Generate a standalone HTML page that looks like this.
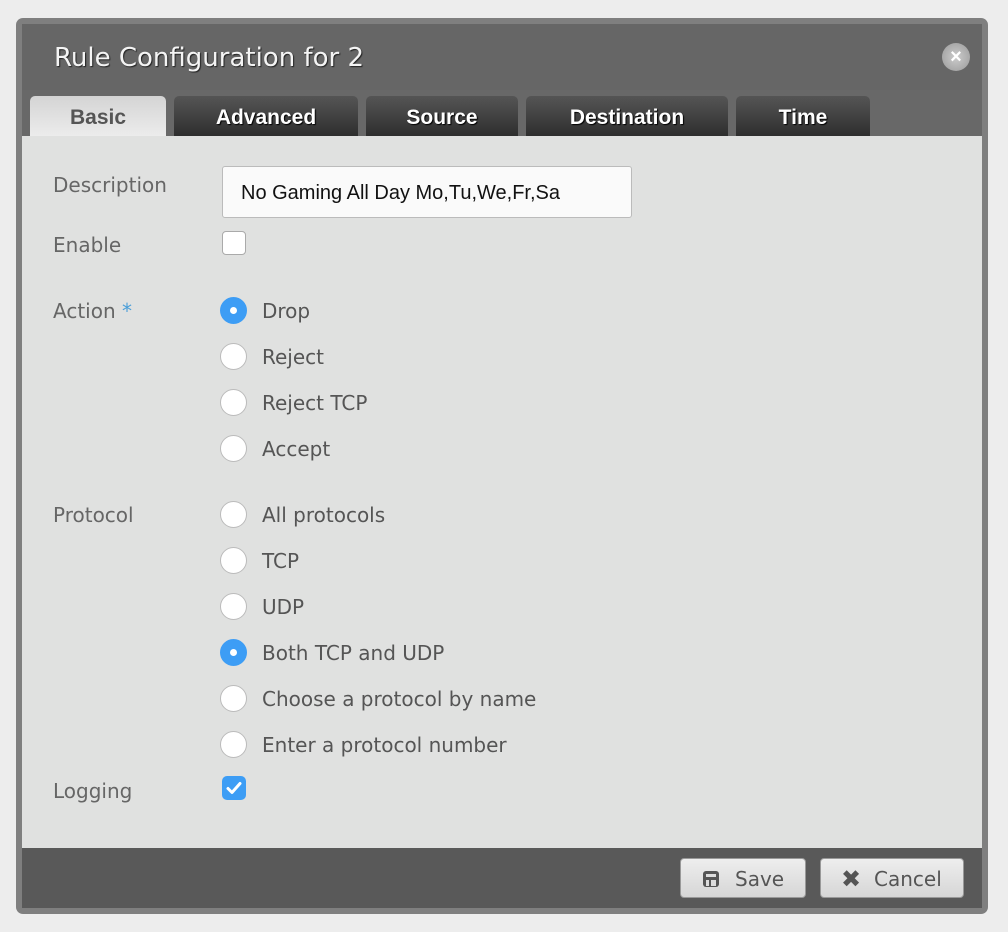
<!DOCTYPE html>
<html><head><style>
*{box-sizing:border-box;margin:0;padding:0}
body{width:1008px;height:932px;background:#ededed;font-family:"Liberation Sans",sans-serif;position:relative;overflow:hidden}
.dlg{position:absolute;left:16px;top:18px;width:972px;height:896px;background:#7f7f7f;border-radius:7px}
.title{position:absolute;left:22px;top:24px;width:960px;height:66px;background:#666;color:#f4f4f4;font-family:"DejaVu Sans",sans-serif;font-size:26px;padding:19px 0 0 32px;text-shadow:1px 1px 1px #222}
.close{position:absolute;left:942px;top:43px;width:28px;height:28px;border-radius:50%;background:radial-gradient(#ccc,#999);color:#fff;font-size:20px;font-weight:bold;text-align:center;line-height:28px}
.strip{position:absolute;left:22px;top:90px;width:960px;height:46px;background:#686868}
.tab{position:absolute;top:96px;height:40px;border-radius:5px 5px 0 0;background:linear-gradient(#555,#2e2e2e);color:#fff;font-weight:bold;font-size:21px;text-align:center;line-height:44px;text-shadow:1px 1px 1px #000}
.tab.on{background:linear-gradient(#d4d4d4,#ececec);color:#555;text-shadow:none}
.content{position:absolute;left:22px;top:136px;width:960px;height:712px;background:#e0e1e0}
.foot{position:absolute;left:22px;top:848px;width:960px;height:60px;background:#595959}
.lbl{position:absolute;left:53px;font-family:"DejaVu Sans",sans-serif;font-size:20px;color:#666}
.opt{position:absolute;left:262px;font-family:"DejaVu Sans",sans-serif;font-size:20px;color:#555}
.r{position:absolute;left:220px;width:27px;height:27px;border-radius:50%;background:#fff;border:1px solid #bbb}
.r.on{background:#3d9df5;border-color:#3d9df5}
.r.on::after{content:"";position:absolute;left:9px;top:9px;width:7px;height:7px;border-radius:50%;background:#fff}
.inp{position:absolute;left:222px;top:166px;width:410px;height:52px;background:#fafafa;border:1px solid #bbb;border-radius:3px;font-size:20px;color:#111;padding:15px 0 0 18px}
.btn{position:absolute;top:858px;height:40px;border-radius:4px;background:linear-gradient(#eee,#d6d6d6);border:1px solid #999;color:#555;font-family:"DejaVu Sans",sans-serif;font-size:20px;line-height:40px}
</style></head><body>
<div class="dlg"></div>
<div class="title">Rule Configuration for 2</div>
<div class="close">×</div>
<div class="strip"></div>
<div class="content"></div>
<div class="tab on" style="left:30px;width:136px">Basic</div>
<div class="tab" style="left:174px;width:184px">Advanced</div>
<div class="tab" style="left:366px;width:152px">Source</div>
<div class="tab" style="left:526px;width:202px">Destination</div>
<div class="tab" style="left:736px;width:134px">Time</div>

<div class="lbl" style="top:173px">Description</div>
<div class="inp">No Gaming All Day Mo,Tu,We,Fr,Sa</div>
<div class="lbl" style="top:233px">Enable</div>
<div style="position:absolute;left:222px;top:231px;width:24px;height:24px;background:#fff;border:1px solid #aaa;border-radius:4px"></div>
<div class="lbl" style="top:299px">Action <span style="color:#4a9ed8">*</span></div>
<div class="r on" style="top:297px"></div><div class="opt" style="top:299px">Drop</div>
<div class="r" style="top:343px"></div><div class="opt" style="top:345px">Reject</div>
<div class="r" style="top:389px"></div><div class="opt" style="top:391px">Reject TCP</div>
<div class="r" style="top:435px"></div><div class="opt" style="top:437px">Accept</div>
<div class="lbl" style="top:503px">Protocol</div>
<div class="r" style="top:501px"></div><div class="opt" style="top:503px">All protocols</div>
<div class="r" style="top:547px"></div><div class="opt" style="top:549px">TCP</div>
<div class="r" style="top:593px"></div><div class="opt" style="top:595px">UDP</div>
<div class="r on" style="top:639px"></div><div class="opt" style="top:641px">Both TCP and UDP</div>
<div class="r" style="top:685px"></div><div class="opt" style="top:687px">Choose a protocol by name</div>
<div class="r" style="top:731px"></div><div class="opt" style="top:733px">Enter a protocol number</div>
<div class="lbl" style="top:779px">Logging</div>
<div style="position:absolute;left:222px;top:776px;width:24px;height:24px;background:#3d9df5;border-radius:5px">
<svg width="24" height="24" viewBox="0 0 24 24"><path d="M6 12.5l4 4 8-9" fill="none" stroke="#fff" stroke-width="3" stroke-linecap="round" stroke-linejoin="round"/></svg></div>

<div class="foot"></div>
<div class="btn" style="left:680px;width:126px"><svg style="position:absolute;left:21px;top:11px" width="18" height="18" viewBox="0 0 18 18"><rect x="1" y="1" width="16" height="16" rx="3" fill="#555"/><rect x="4" y="4" width="10" height="3" fill="#ddd"/><rect x="4" y="10" width="10" height="6" fill="#ddd"/><rect x="7" y="10" width="2" height="6" fill="#555"/></svg><span style="position:absolute;left:54px">Save</span></div>
<div class="btn" style="left:820px;width:144px"><span style="position:absolute;left:20px;font-weight:bold;font-size:24px;color:#555">✖</span><span style="position:absolute;left:53px">Cancel</span></div>
</body></html>
